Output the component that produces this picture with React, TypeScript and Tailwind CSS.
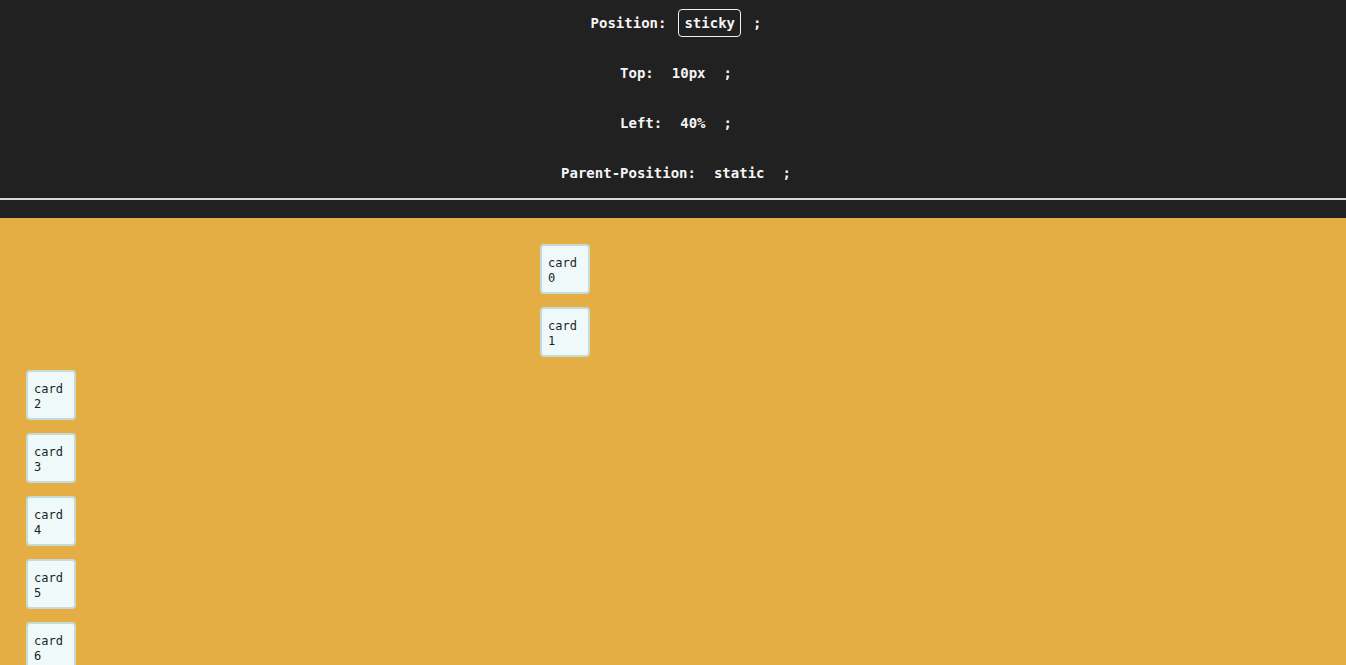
import React from "react";

const mono = { fontFamily: '"DejaVu Sans Mono", "Liberation Mono", monospace' };

function Row({ label, value, selected }: { label: string; value: string; selected?: boolean }) {
  return (
    <div className="flex h-[28px] items-center justify-center pl-[6px] text-[14px] font-bold text-[#f5f5f5]">
      <span>{label}</span>
      <span
        className={
          "mx-3 flex h-[28px] items-center rounded-[4px] border px-[5px] " +
          (selected ? "border-[#f0f0f0]" : "border-transparent")
        }
      >
        {value}
      </span>
      <span>;</span>
    </div>
  );
}

function Card({ n, shifted }: { n: number; shifted?: boolean }) {
  return (
    <div
      className={
        "h-[50px] w-[50px] shrink-0 rounded-[4px] border-2 border-[#c5dcd6] bg-[#f0f9f9] pl-[6px] pt-[10px] text-[12px] leading-[15px] text-[#1e1e1e] " +
        (shifted ? "ml-[514px]" : "")
      }
    >
      <div>card</div>
      <div>{n}</div>
    </div>
  );
}

export default function App() {
  return (
    <div className="h-[665px] w-full overflow-hidden bg-[#e5ae45]" style={mono}>
      <div className="bg-[#212121] pb-[18px]">
        <div className="flex flex-col gap-[22px] pt-[9px]">
          <Row label="Position:" value="sticky" selected />
          <Row label="Top:" value="10px" />
          <Row label="Left:" value="40%" />
          <Row label="Parent-Position:" value="static" />
        </div>
        <div className="mt-[11px] h-[2px] bg-[#d9d9d9]" />
      </div>
      <div className="flex flex-col gap-[13px] pl-[26px] pt-[26px]">
        {[0, 1, 2, 3, 4, 5, 6, 7].map((i) => (
          <Card key={i} n={i} shifted={i < 2} />
        ))}
      </div>
    </div>
  );
}
